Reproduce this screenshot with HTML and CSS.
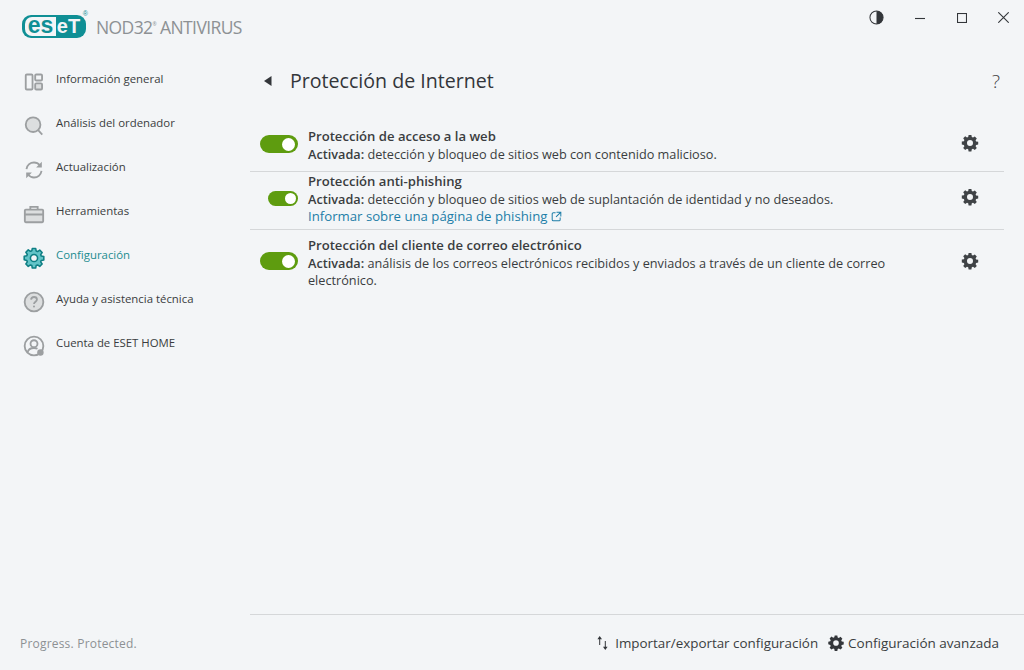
FILE: index.html
```html
<!DOCTYPE html>
<html lang="es">
<head>
<meta charset="utf-8">
<title>ESET NOD32 Antivirus</title>
<link rel="stylesheet" href="styles.css">
</head>
<body>
<svg class="defs" width="0" height="0" aria-hidden="true">
  <defs>
    <path id="gear" d="M6.600 0h2.800l.4 2.100 1.200.5L12.800 1.400l2 2-1.200 1.800.5 1.200 2.100.4v2.800l-2.100.4-.5 1.200 1.200 1.800-2 2-1.800-1.200-1.200.5-.4 2.100H6.600l-.4-2.100-1.200-.5-1.800 1.200-2-2 1.200-1.800-.5-1.200L-.2 9.400V6.600l2.100-.4.5-1.200L1.200 3.200l2-2L5 2.400l1.200-.5zM8 5a3 3 0 1 0 0 6 3 3 0 0 0 0-6z" fill-rule="evenodd"/>
  </defs>
</svg>
<div class="app">
  <aside class="sidebar">
    <div class="brand">
      <div class="eset-logo">
        <span class="eset-es">es</span><span class="eset-et">eT</span><span class="eset-reg">®</span>
      </div>
      <span class="product">NOD32<sup class="tm">®</sup> ANTIVIRUS</span>
    </div>
    <nav class="nav">
      <a class="nav-item">
        <svg class="nav-icon" viewBox="0 0 24 24"><rect x="3" y="3.800" width="7.400" height="16.400" rx="1.200" class="ic-line"/><rect x="13.300" y="3.800" width="7.500" height="6.600" rx="1.200" class="ic-line"/><rect x="13.300" y="13.500" width="7.500" height="6.700" rx="1.200" class="ic-fill"/></svg>
        <span>Información general</span>
      </a>
      <a class="nav-item">
        <svg class="nav-icon" viewBox="0 0 24 24"><circle cx="11" cy="10.500" r="8" class="ic-fill"/><path d="M16.500 16.500l4.500 4.800" class="ic-line"/></svg>
        <span>Análisis del ordenador</span>
      </a>
      <a class="nav-item">
        <svg class="nav-icon" viewBox="0 0 24 24"><path d="M3.800 11C4.500 6.500 8 3.800 12 3.800c2.700 0 4.700 1 6.300 3" class="ic-line"/><path d="M20.500 3v6.200h-6.200z" class="ic-solid"/><path d="M20.200 13c-.7 4.500-4.200 7.200-8.200 7.200-2.700 0-4.700-1-6.300-3" class="ic-line"/><path d="M3.500 21v-6.200h6.200z" class="ic-solid"/></svg>
        <span>Actualización</span>
      </a>
      <a class="nav-item">
        <svg class="nav-icon" viewBox="0 0 24 24"><rect x="2" y="7.300" width="20" height="13.700" rx="1" class="ic-fill"/><path d="M8 7V4.300h8V7M2 12.500h20" class="ic-line"/></svg>
        <span>Herramientas</span>
      </a>
      <a class="nav-item nav-item-active">
        <svg class="nav-icon nav-icon-gear" viewBox="-1.200 -1.200 18.400 18.400"><use href="#gear" class="ic-teal"/></svg>
        <span>Configuración</span>
      </a>
      <a class="nav-item">
        <svg class="nav-icon" viewBox="0 0 24 24"><circle cx="12" cy="12" r="10.200" class="ic-fill"/><path d="M8.800 9.500c.2-2 1.500-3 3.200-3 1.900 0 3.200 1.200 3.200 2.800 0 2.400-3.200 2.500-3.200 5" class="ic-line"/><circle cx="12" cy="17" r="1.100" class="ic-solid"/></svg>
        <span>Ayuda y asistencia técnica</span>
      </a>
      <a class="nav-item">
        <svg class="nav-icon" viewBox="0 0 24 24"><circle cx="12" cy="12" r="10.200" class="ic-line"/><circle cx="12" cy="9.500" r="3.800" class="ic-line"/><path d="M5 19c.6-3 3.200-4.800 7-4.800 1.500 0 2.800.3 3.800.8" class="ic-line"/><circle cx="19" cy="19" r="3.500" class="ic-solid"/></svg>
        <span>Cuenta de ESET HOME</span>
      </a>
    </nav>
    <p class="tagline">Progress. Protected.</p>
  </aside>
  <main class="main">
    <div class="window-bar">
      <svg class="win-icon win-contrast" viewBox="0 0 16 16"><circle cx="8" cy="8" r="7" class="win-line"/><path d="M8 1a7 7 0 0 1 0 14z" class="win-solid"/></svg>
      <svg class="win-icon win-min" viewBox="0 0 10 10"><path d="M0 5.500h10" class="win-line"/></svg>
      <svg class="win-icon win-max" viewBox="0 0 10 10"><rect x=".5" y=".5" width="9" height="9" class="win-line"/></svg>
      <svg class="win-icon win-close" viewBox="0 0 11 11"><path d="M.3.300l10.400 10.400M10.700.300L.3 10.700" class="win-line"/></svg>
    </div>
    <header class="page-head">
      <svg class="back" viewBox="0 0 8 10"><path d="M7.500 0v10L0 5z"/></svg>
      <h1>Protección de Internet</h1>
      <span class="help">?</span>
    </header>
    <section class="list">
      <article class="row row-a">
        <div class="toggle-cell"><span class="toggle"></span></div>
        <div class="row-text">
          <h2>Protección de acceso a la web</h2>
          <p><b>Activada:</b> detección y bloqueo de sitios web con contenido malicioso.</p>
        </div>
        <svg class="row-gear" viewBox="-1 -1 18 18"><use href="#gear"/></svg>
      </article>
      <article class="row row-b">
        <div class="toggle-cell"><span class="toggle toggle-small"></span></div>
        <div class="row-text">
          <h2>Protección anti-phishing</h2>
          <p><b>Activada:</b> detección y bloqueo de sitios web de suplantación de identidad y no deseados.</p>
          <a class="link">Informar sobre una página de phishing <svg class="ext" viewBox="0 0 12 12"><path d="M5 2H2.500A1.200 1.200 0 0 0 1.300 3.200v6.300a1.200 1.200 0 0 0 1.200 1.200h6.300A1.200 1.200 0 0 0 10 9.500V7M6 1.300h4.700V6M10.500 1.500L5.500 6.500"/></svg></a>
        </div>
        <svg class="row-gear" viewBox="-1 -1 18 18"><use href="#gear"/></svg>
      </article>
      <article class="row row-c">
        <div class="toggle-cell"><span class="toggle"></span></div>
        <div class="row-text">
          <h2>Protección del cliente de correo electrónico</h2>
          <p><b>Activada:</b> análisis de los correos electrónicos recibidos y enviados a través de un cliente de correo electrónico.</p>
        </div>
        <svg class="row-gear" viewBox="-1 -1 18 18"><use href="#gear"/></svg>
      </article>
    </section>
    <footer class="foot">
      <a class="foot-link foot-link-import">
        <svg class="foot-arrows" viewBox="0 0 11 14"><path d="M2.700 0L.4 3.200h1.800V9h1V3.200H5zM8.300 14l2.300-3.200H8.800V5h-1v5.800H6z"/></svg>
        <span>Importar/exportar configuración</span>
      </a>
      <a class="foot-link">
        <svg class="foot-gear" viewBox="-.5 -.5 17 17"><use href="#gear"/></svg>
        <span>Configuración avanzada</span>
      </a>
    </footer>
  </main>
</div>
</body>
</html>
```

FILE: styles.css
```css
* { box-sizing: border-box; }
html, body { margin: 0; height: 100%; }
body {
  background: #f3f5f7;
  color: #3a3d40;
  font-family: "Open Sans", "Noto Sans", "Liberation Sans", sans-serif;
  overflow: hidden;
}
.defs { position: absolute; }
h1, h2, p { margin: 0; }
b { font-weight: 600; }

.app {
  display: grid;
  grid-template-columns: 250px 1fr;
  width: 1024px;
  height: 670px;
}

/* Sidebar */
.sidebar { display: flex; flex-direction: column; }
.brand {
  display: flex;
  align-items: flex-start;
  gap: 10px;
  padding: 15px 0 0 22px;
  height: 70px;
}
.eset-logo {
  position: relative;
  display: flex;
  align-items: stretch;
  flex: none;
  width: 64px;
  height: 23px;
  border-radius: 9px;
  background: #0f8f95;
  font-family: "Liberation Sans", sans-serif;
  font-weight: 700;
}
.eset-es {
  display: flex;
  align-items: center;
  justify-content: center;
  width: 31px;
  margin: 2px 0 2px 3px;
  padding-bottom: 3px;
  color: #0f8f95;
  background: #f3f5f7;
  border-radius: 7px 0 0 7px;
  font-size: 23px;
  line-height: 16px;
}
.eset-et {
  flex: 1;
  padding-right: 5px;
  color: #f3f5f7;
  font-size: 20px;
  line-height: 22px;
  text-align: center;
}
.eset-reg {
  position: absolute;
  top: -5px;
  right: -2px;
  font-size: 7px;
  line-height: 7px;
  font-weight: 400;
  color: #0f8f95;
}
.product {
  font-size: 17.500px;
  line-height: 24px;
  letter-spacing: -0.6px;
  color: #8d9194;
  white-space: nowrap;
}
.tm { font-size: 5px; vertical-align: 8px; line-height: 0; }

.nav { display: flex; flex-direction: column; padding-left: 23px; }
.nav-item {
  display: flex;
  align-items: flex-start;
  gap: 11px;
  height: 44px;
  font-size: 11.400px;
  line-height: 18px;
  color: #3a3d40;
}
.nav-icon {
  flex: none;
  width: 22px;
  height: 22px;
  margin-top: 1px;
}
.nav-item-active { color: #1d8c90; font-weight: 500; }
.ic-line { fill: none; stroke: #9c9fa1; stroke-width: 2; }
.ic-fill { fill: #dcdedf; stroke: #9c9fa1; stroke-width: 2; }
.ic-solid { fill: #9c9fa1; }
.ic-teal { fill: #63c4c8; stroke: #0f7f84; stroke-width: 1.300; stroke-linejoin: round; }
.tagline {
  margin: auto 0 17px 20px;
  font-size: 12px;
  line-height: 18px;
  letter-spacing: 0.2px;
  color: #8d9194;
}

/* Main */
.main { display: flex; flex-direction: column; min-width: 0; }
.window-bar {
  display: flex;
  align-items: center;
  justify-content: flex-end;
  height: 34px;
  padding-right: 15px;
}
.win-icon { flex: none; }
.win-contrast { width: 15px; height: 15px; margin-right: 31px; }
.win-min { width: 10px; height: 10px; margin-right: 32px; margin-top: 1px; }
.win-max { width: 10px; height: 10px; margin-right: 31px; margin-top: 2px; }
.win-close { width: 11px; height: 11px; margin-top: 1px; }
.win-line { fill: none; stroke: #33363a; stroke-width: 1.100; }
.win-solid { fill: #33363a; }

.page-head {
  display: flex;
  align-items: center;
  height: 50px;
  margin-top: 22px;
  padding-left: 14px;
  padding-right: 24px;
}
.back { width: 8px; height: 10px; fill: #33363a; margin-right: 18px; flex: none; }
h1 {
  flex: 1;
  font-size: 19.600px;
  font-weight: 500;
  line-height: 26px;
  color: #33363a;
}
.help { font-size: 19px; line-height: 24px; color: #3f4346; font-weight: 300; }

.list { display: flex; flex-direction: column; margin-top: 17px; margin-right: 20px; }
.row {
  display: flex;
  align-items: center;
  padding-bottom: 4px;
  border-bottom: 1px solid #d5d7d9;
}
.row:last-child { border-bottom: 0; align-items: flex-start; padding: 6px 0 0; }
.row-a { height: 49px; }
.row-b { height: 58px; }
.toggle-cell {
  flex: none;
  width: 58px;
  padding: 0 10px;
  display: flex;
  justify-content: flex-end;
}
.row-a .toggle-cell { margin-top: -2px; }
.row-b .toggle-cell { margin-top: -1px; }
.row-c .toggle-cell { margin-top: 16px; }
.toggle {
  position: relative;
  display: block;
  width: 38px;
  height: 18px;
  border-radius: 9px;
  background: #5e9c0f;
}
.toggle::after {
  content: "";
  position: absolute;
  top: 2.500px;
  right: 3px;
  width: 13px;
  height: 13px;
  border-radius: 50%;
  background: #fff;
}
.toggle-small { width: 30px; height: 15px; }
.toggle-small::after { top: 2px; right: 2px; width: 11px; height: 11px; }
.row-text { flex: 1; min-width: 0; font-size: 12.700px; line-height: 18px; padding-right: 62px; }
h2 { font-size: 13.100px; font-weight: 600; line-height: 18px; color: #3a3d40; }
.row-c p { line-height: 17.500px; margin-top: .5px; }
.link { display: block; font-weight: 500; color: #1d7ea8; line-height: 17px; font-size: 13.200px; }
.ext { width: 11px; height: 11px; fill: none; stroke: #1d7ea8; stroke-width: 1.100; vertical-align: -1px; }
.row-gear {
  flex: none;
  width: 18px;
  height: 18px;
  fill: #3f4346;
  margin-right: 25px;
}
.row-a .row-gear { margin-top: -4px; }
.row-b .row-gear { margin-top: -3px; }
.row-c .row-gear { margin-top: 16px; }

.foot {
  display: flex;
  align-items: center;
  justify-content: flex-end;
  gap: 10px;
  margin-top: auto;
  height: 56px;
  padding-right: 25px;
  border-top: 1px solid #d5d7d9;
  font-size: 13.500px;
  font-weight: 500;
  color: #3a3d40;
}
.foot-link { display: flex; align-items: center; gap: 4px; }
.foot-link-import { gap: 7px; font-size: 13.400px; }
.foot-arrows { width: 11px; height: 14px; fill: #33363a; }
.foot-gear { width: 16px; height: 16px; fill: #33363a; }
```
